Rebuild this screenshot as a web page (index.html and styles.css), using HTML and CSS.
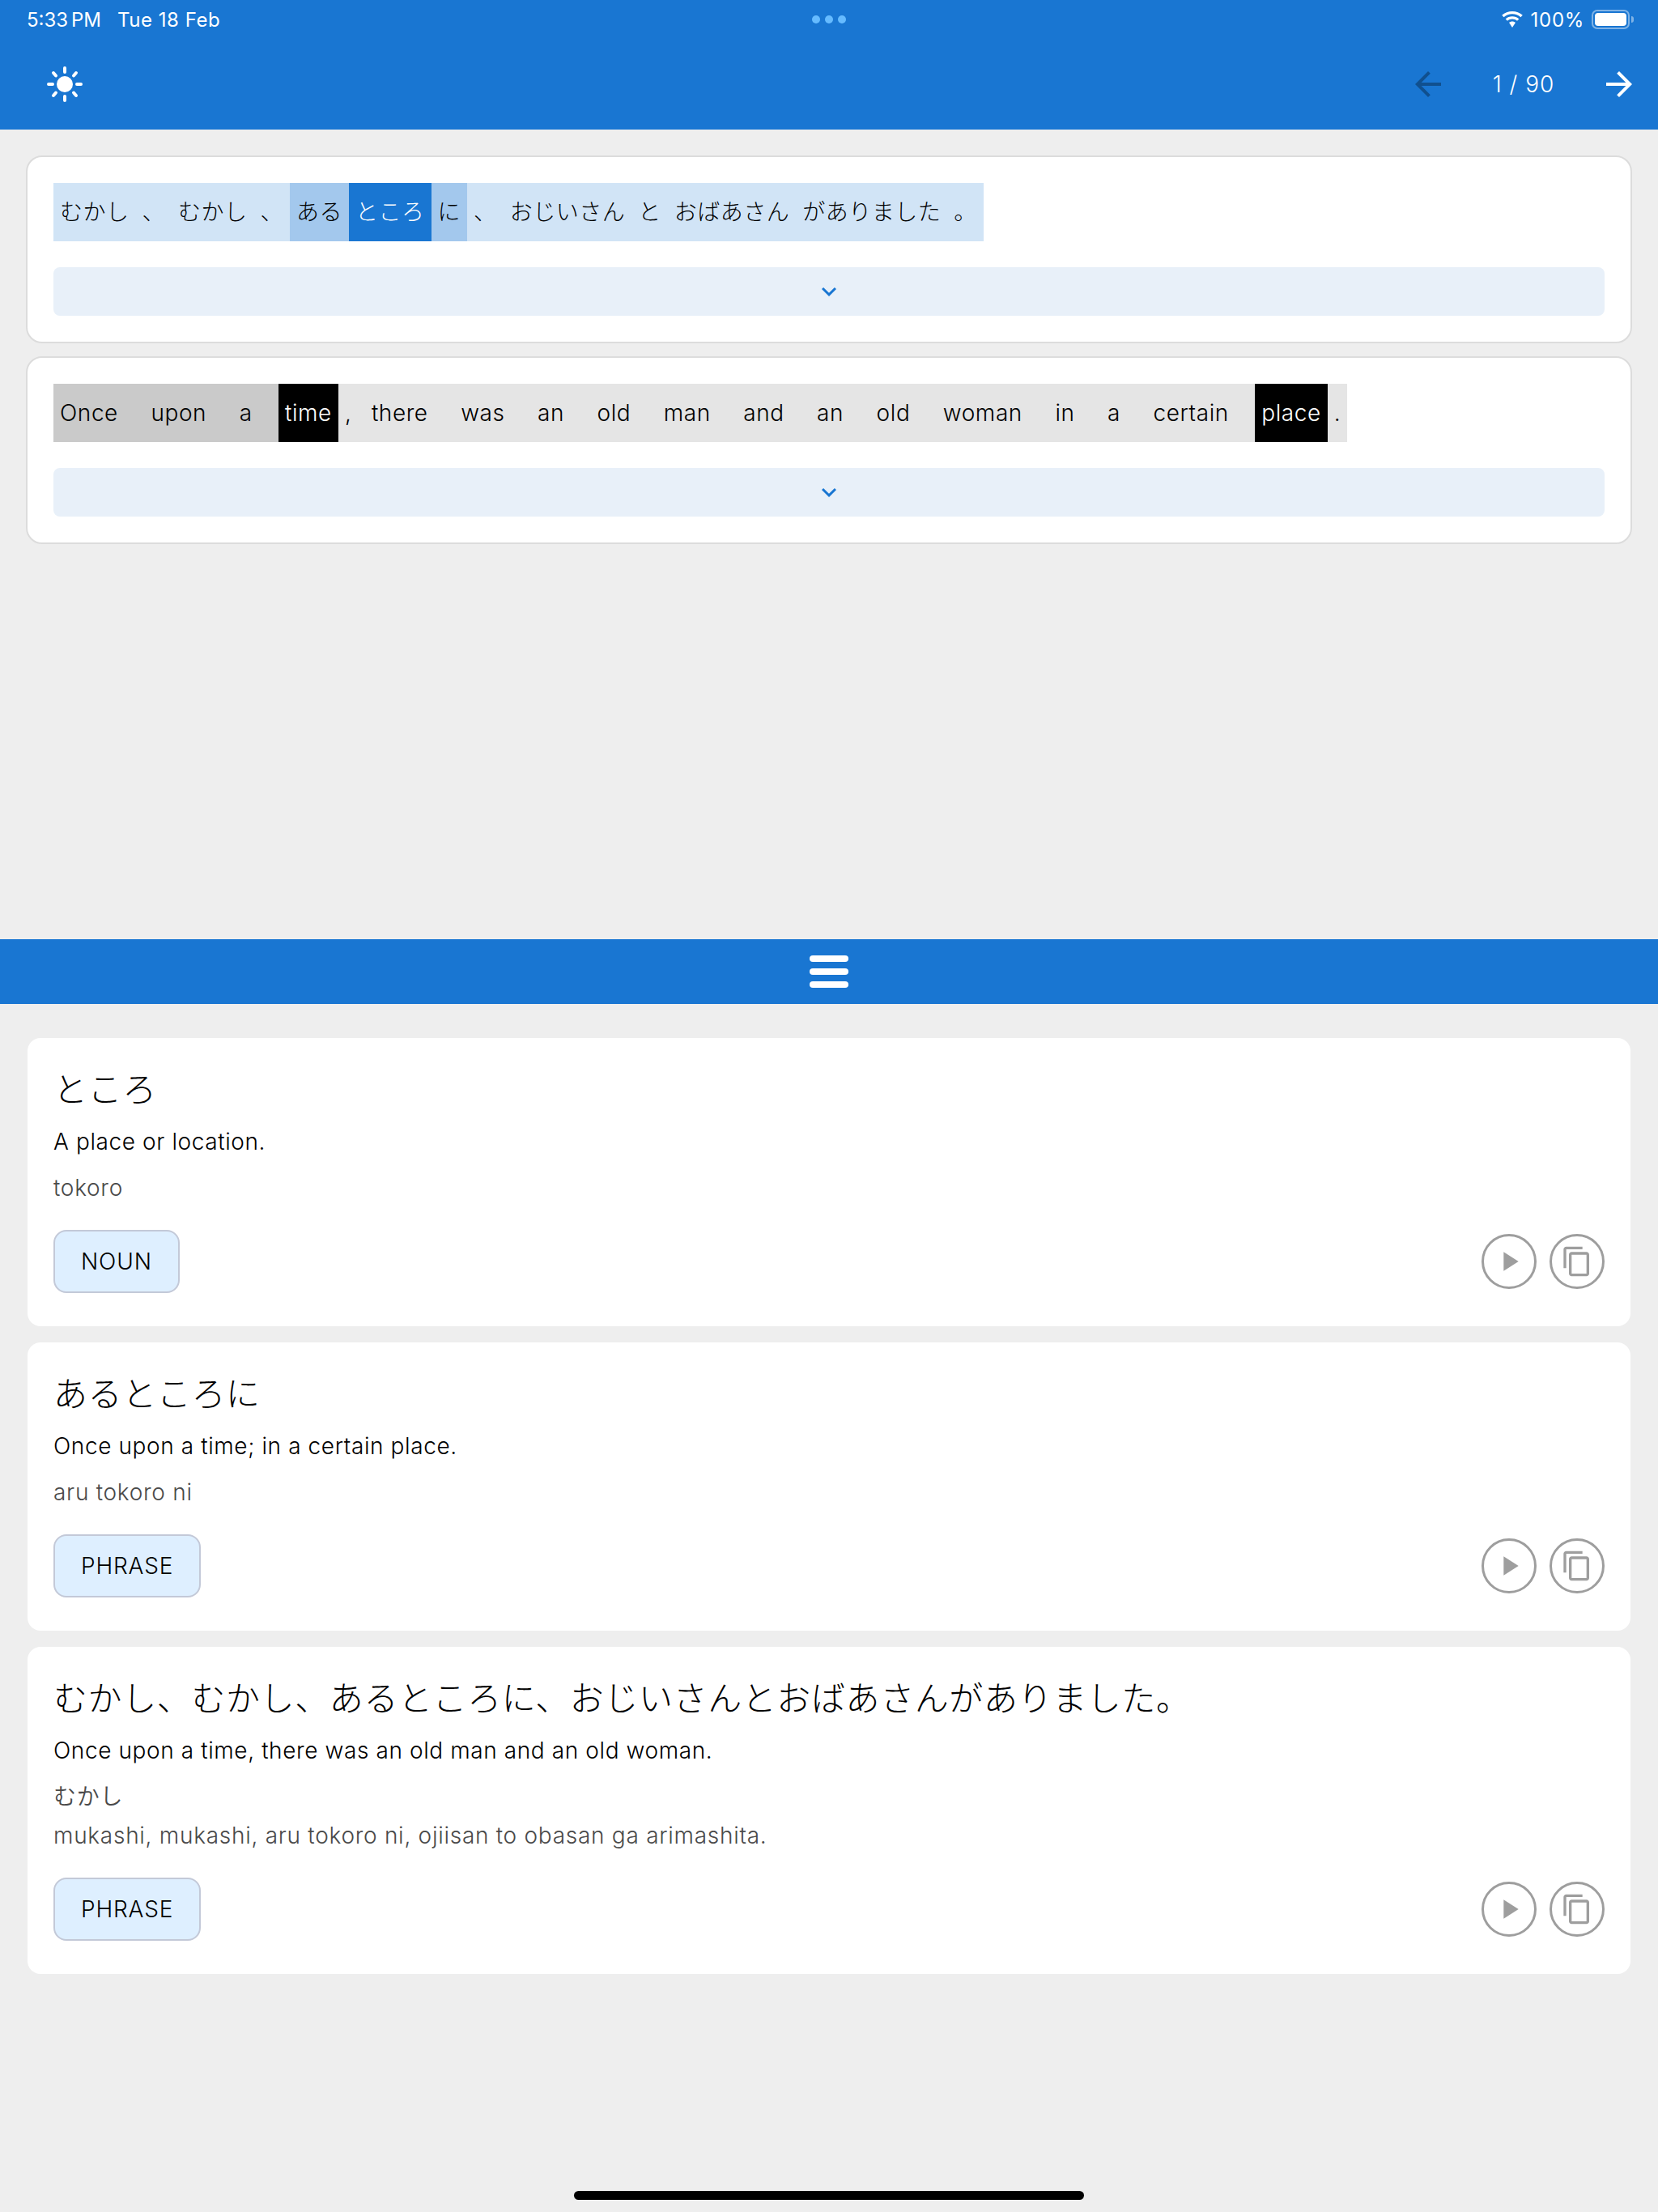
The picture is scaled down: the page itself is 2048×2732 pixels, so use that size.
FILE: index.html
```html
<!DOCTYPE html>
<html lang="en">
<head>
<meta charset="utf-8">
<title>Reader</title>
<link rel="stylesheet" href="styles.css">
</head>
<body>
<div class="app">
  <header class="appbar">
    <div class="status">
      <div class="status-left"><span class="clock">5:33 PM</span><span class="date">Tue 18 Feb</span></div>
      <div class="dots"><i></i><i></i><i></i></div>
      <div class="status-right">
        <svg class="wifi" viewBox="0 0 28 20"><path d="M14 3.200c4 0 7.600 1.500 10.400 4l2.400-2.500C23.300 1.600 18.900 0 14 0S4.700 1.600 1.200 4.700l2.400 2.500c2.800-2.500 6.400-4 10.400-4zm0 6.300c2.300 0 4.400.8 6 2.300l2.300-2.400C20.100 7.400 17.200 6.200 14 6.200S7.900 7.400 5.700 9.400L8 11.800c1.600-1.500 3.700-2.300 6-2.300zm0 3c-1.500 0-2.800.5-3.900 1.500L14 20l3.900-6c-1.100-1-2.400-1.500-3.900-1.500z"/></svg>
        <span class="pct">100%</span>
        <span class="battery"><span class="battery-fill"></span></span><span class="battery-nub"></span>
      </div>
    </div>
    <div class="toolbar">
      <svg class="sun" viewBox="0 0 48 48"><circle cx="24" cy="24" r="10"/><g class="rays"><path d="M24 4v5M24 39v5M4 24h5M39 24h5M10 10l3 3.500M35 34.500l3 3.500M10 38l3-3.500M35 13.500l3-3.500"/></g></svg>
      <div class="pager">
        <svg class="nav nav-off" viewBox="0 0 24 24"><path d="M20 11H7.830l5.590-5.590L12 4l-8 8 8 8 1.410-1.410L7.830 13H20v-2z"/></svg>
        <span class="count">1 / 90</span>
        <svg class="nav" viewBox="0 0 24 24"><path d="M12 4l-1.410 1.410L16.170 11H4v2h12.170l-5.580 5.590L12 20l8-8z"/></svg>
      </div>
    </div>
  </header>

  <section class="reader">
    <article class="sentence">
      <div class="tokens ja">
        <span class="t">むかし</span><span class="t">、</span><span class="t">むかし</span><span class="t">、</span><span class="t mid">ある</span><span class="t on">ところ</span><span class="t mid">に</span><span class="t">、</span><span class="t">おじいさん</span><span class="t">と</span><span class="t">おばあさん</span><span class="t">がありました</span><span class="t">。</span>
      </div>
      <button class="expander"><svg viewBox="0 0 24 24"><path d="M16.590 8.590L12 13.170 7.410 8.590 6 10l6 6 6-6z"/></svg></button>
    </article>
    <article class="sentence">
      <div class="tokens en">
        <span class="t mid">Once</span><span class="t mid"> </span><span class="t mid">upon</span><span class="t mid"> </span><span class="t mid">a</span><span class="t mid"> </span><span class="t on">time</span><span class="t">, </span><span class="t">there</span><span class="t"> </span><span class="t">was</span><span class="t"> </span><span class="t">an</span><span class="t"> </span><span class="t">old</span><span class="t"> </span><span class="t">man</span><span class="t"> </span><span class="t">and</span><span class="t"> </span><span class="t">an</span><span class="t"> </span><span class="t">old</span><span class="t"> </span><span class="t">woman</span><span class="t"> </span><span class="t">in</span><span class="t"> </span><span class="t">a</span><span class="t"> </span><span class="t">certain</span><span class="t"> </span><span class="t on">place</span><span class="t">.</span>
      </div>
      <button class="expander"><svg viewBox="0 0 24 24"><path d="M16.590 8.590L12 13.170 7.410 8.590 6 10l6 6 6-6z"/></svg></button>
    </article>
  </section>

  <div class="divider">
    <div class="handle"><i></i><i></i><i></i></div>
  </div>

  <section class="entries">
    <article class="entry">
      <h2 class="term">ところ</h2>
      <p class="def">A place or location.</p>
      <p class="reading">tokoro</p>
      <div class="entry-foot">
        <span class="pill">NOUN</span>
        <div class="actions">
          <button class="round"><svg viewBox="0 0 24 24"><path d="M8 5v14l11-7z"/></svg></button>
          <button class="round"><svg viewBox="0 0 24 24"><path d="M16 1H4c-1.100 0-2 .9-2 2v14h2V3h12V1zm3 4H8c-1.100 0-2 .9-2 2v14c0 1.100.9 2 2 2h11c1.100 0 2-.9 2-2V7c0-1.100-.9-2-2-2zm0 16H8V7h11v14z"/></svg></button>
        </div>
      </div>
    </article>
    <article class="entry">
      <h2 class="term">あるところに</h2>
      <p class="def">Once upon a time; in a certain place.</p>
      <p class="reading">aru tokoro ni</p>
      <div class="entry-foot">
        <span class="pill">PHRASE</span>
        <div class="actions">
          <button class="round"><svg viewBox="0 0 24 24"><path d="M8 5v14l11-7z"/></svg></button>
          <button class="round"><svg viewBox="0 0 24 24"><path d="M16 1H4c-1.100 0-2 .9-2 2v14h2V3h12V1zm3 4H8c-1.100 0-2 .9-2 2v14c0 1.100.9 2 2 2h11c1.100 0 2-.9 2-2V7c0-1.100-.9-2-2-2zm0 16H8V7h11v14z"/></svg></button>
        </div>
      </div>
    </article>
    <article class="entry">
      <h2 class="term">むかし、むかし、あるところに、おじいさんとおばあさんがありました。</h2>
      <p class="def">Once upon a time, there was an old man and an old woman.</p>
      <p class="reading">むかし</p>
      <p class="reading reading-tight">mukashi, mukashi, aru tokoro ni, ojiisan to obasan ga arimashita.</p>
      <div class="entry-foot">
        <span class="pill">PHRASE</span>
        <div class="actions">
          <button class="round"><svg viewBox="0 0 24 24"><path d="M8 5v14l11-7z"/></svg></button>
          <button class="round"><svg viewBox="0 0 24 24"><path d="M16 1H4c-1.100 0-2 .9-2 2v14h2V3h12V1zm3 4H8c-1.100 0-2 .9-2 2v14c0 1.100.9 2 2 2h11c1.100 0 2-.9 2-2V7c0-1.100-.9-2-2-2zm0 16H8V7h11v14z"/></svg></button>
        </div>
      </div>
    </article>
  </section>
  <div class="home-indicator"></div>
</div>
</body>
</html>
```

FILE: styles.css
```css
* { box-sizing: border-box; }
html, body { margin: 0; padding: 0; }
body {
  background: #eeeeee;
  color: #000;
  font-family: Inter, "Noto Sans CJK JP", sans-serif;
}
.app { position: relative; height: 2732px; display: flex; flex-direction: column; overflow: hidden; }

/* App bar */
.appbar { height: 160px; background: #1976d2; color: #fff; flex: none; }
.status { height: 48px; padding: 0 30px 0 33px; display: flex; align-items: center; justify-content: space-between; font-size: 24px; position: relative; }
.status-left { display: flex; gap: 20px; }
.clock { word-spacing: -3px; }
.date { letter-spacing: .55px; }
.dots { position: absolute; left: 1003px; top: 19px; display: flex; gap: 6px; }
.dots i { width: 10px; height: 10px; border-radius: 50%; background: #66bbff; }
.status-right { display: flex; align-items: center; }
.wifi { width: 28px; height: 20px; fill: #fff; margin-right: 9px; }
.pct { margin-right: 9px; letter-spacing: .7px; }
.battery { width: 47px; height: 24px; border: 2px solid rgba(255,255,255,.45); border-radius: 7px; padding: 2px; display: block; }
.battery-fill { display: block; height: 100%; background: #fff; border-radius: 4px; }
.battery-nub { width: 3px; height: 8px; background: rgba(255,255,255,.45); border-radius: 0 3px 3px 0; margin-left: 2px; }
.toolbar { height: 112px; padding: 0 24px 0 56px; display: flex; align-items: center; justify-content: space-between; }
.sun { width: 48px; height: 48px; fill: #fff; }
.rays path { fill: none; stroke: #fff; stroke-width: 4; stroke-linecap: round; }
.pager { display: flex; align-items: center; }
.nav { width: 48px; height: 48px; fill: #fff; }
.nav-off { fill: #10508f; }
.count { width: 188px; text-align: center; font-size: 28px; font-weight: 300; letter-spacing: 1px; }

/* Reader pane */
.reader { height: 1000px; flex: none; padding: 32px 32px 0; display: flex; flex-direction: column; gap: 16px; }
.sentence { height: 232px; padding: 32px; background: #fff; border: 2px solid #dcdcdc; border-radius: 20px; display: flex; flex-direction: column; gap: 32px; }
.tokens { display: flex; height: 72px; font-size: 28px; line-height: 72px; letter-spacing: .58px; font-weight: 350; }
.tokens.ja { letter-spacing: .5px; font-weight: 300; }
.t { display: block; padding: 0 8px; white-space: pre; background: #e5e5e5; }
.ja .t { background: #d1e4f6; }
.en .mid { background: #cacaca; }
.ja .mid { background: #a3c8ed; }
.en .on { background: #000; color: #fff; }
.ja .on { background: #1976d2; color: #fff; }
.expander { height: 60px; border: 0; padding: 0; background: #e8f0f9; border-radius: 8px; display: flex; align-items: center; justify-content: center; }
.expander svg { width: 36px; height: 36px; fill: #1976d2; }

/* Divider */
.divider { height: 80px; flex: none; background: #1976d2; display: flex; align-items: center; justify-content: center; }
.handle { display: flex; flex-direction: column; gap: 8px; }
.handle i { display: block; width: 48px; height: 8px; background: #fff; border-radius: 4px; }

/* Entries */
.entries { padding: 42px 34px 0; display: flex; flex-direction: column; gap: 20px; }
.entry { background: #fff; border-radius: 16px; padding: 32px 32px 41px; }
.term { margin: 0; padding-top: 2px; font-weight: 300; font-size: 42px; line-height: 60px; letter-spacing: .6px; }
.def { margin: 14px 0 0; font-size: 28px; line-height: 40px; letter-spacing: .6px; font-weight: 350; }
.reading { margin: 13px 0 0; font-size: 28px; line-height: 48px; color: #4a4a4a; letter-spacing: .72px; font-weight: 350; }
.reading-tight { margin-top: 0; }
.entry-foot { margin-top: 28px; display: flex; align-items: center; justify-content: space-between; }
.pill { height: 78px; padding: 0 32px; display: flex; align-items: center; background: #deefff; border: 2px solid #c3c9d8; border-radius: 16px; font-size: 28px; letter-spacing: .85px; font-weight: 350; }
.actions { display: flex; gap: 16px; }
.round { width: 68px; height: 68px; padding: 0; background: #fff; border: 3px solid #9e9e9e; border-radius: 50%; display: flex; align-items: center; justify-content: center; }
.round svg { width: 40px; height: 40px; fill: #9e9e9e; }

.home-indicator { position: absolute; left: 709px; top: 2706px; width: 630px; height: 11px; background: #000; border-radius: 6px; }
```
